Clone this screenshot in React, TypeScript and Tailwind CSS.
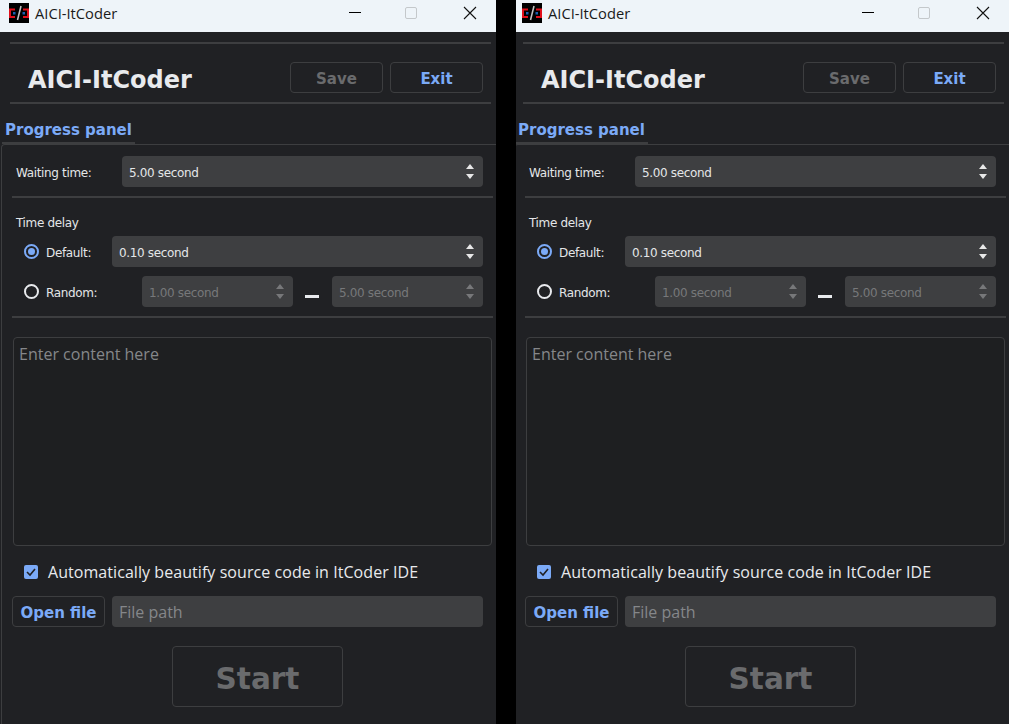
const tahoma = "font-['DejaVu_Sans',sans-serif]";
const small = "font-['DejaVu_Sans',sans-serif] text-[12px] tracking-[-0.35px]";

function Rule({ className = "" }: { className?: string }) {
  return <div className={`h-[2px] bg-[#3d3e40] ${className}`} />;
}

function AppIcon() {
  return (
    <svg width="20" height="20" viewBox="0 0 20 20" className="shrink-0">
      <rect width="20" height="20" fill="#000" />
      <path d="M6 6.5H1V14H6M14 6.5H19V14H14" fill="none" stroke="#e0101c" strokeWidth="2" />
      <rect x="4" y="9" width="2.5" height="2.5" fill="#1c5fb0" />
      <rect x="13.5" y="9" width="2.5" height="2.5" fill="#1c5fb0" />
      <path d="M12 3L8.5 17" stroke="#c4c4c4" strokeWidth="1.6" />
    </svg>
  );
}

function TitleBar() {
  return (
    <div className="flex h-8 shrink-0 items-start bg-[#eef4f9]">
      <div className="ml-[9px] mt-[3px]">
        <AppIcon />
      </div>
      <span className="ml-[6px] mt-[3px] font-['Open_Sans',sans-serif] text-[14.7px] leading-[20px] text-[#1a1a1a]">AICI-ItCoder</span>
      <div className="ml-auto flex items-start">
        <div className="mr-[44px] mt-[12px] h-px w-[12px] bg-black" />
        <div className="mr-[46px] mt-[7px] h-[12px] w-[12px] rounded-[2px] border border-[#c4c8cb]" />
        <svg width="14" height="14" viewBox="0 0 14 14" className="mr-[19px] mt-[6px]">
          <path d="M1 1L13 13M13 1L1 13" stroke="#111" strokeWidth="1.1" fill="none" />
        </svg>
      </div>
    </div>
  );
}

function Spin({ value, disabled = false, className = "" }: { value: string; disabled?: boolean; className?: string }) {
  const arrow = disabled ? "border-[#77787a]" : "border-[#e8e8e8]";
  return (
    <div className={`flex h-[31px] items-center justify-between rounded-[4px] bg-[#3e3f41] pl-[7px] pr-[9px] ${small} ${disabled ? "text-[#77787a]" : "text-[#e4e6e8]"} ${className}`}>
      <span className="pt-[2px]">{value}</span>
      <div className="flex flex-col gap-[5px]">
        <div className={`h-0 w-0 border-x-[4px] border-b-[5px] border-x-transparent ${arrow}`} />
        <div className={`h-0 w-0 border-x-[4px] border-t-[5px] border-x-transparent ${arrow}`} />
      </div>
    </div>
  );
}

function OutlineButton({ label, className = "" }: { label: string; className?: string }) {
  return (
    <div className={`flex items-center justify-center rounded-[4px] border border-[#3d3e40] font-bold ${tahoma} ${className}`}>
      {label}
    </div>
  );
}

function Radio({ checked }: { checked?: boolean }) {
  return (
    <div className={`flex h-[15px] w-[15px] shrink-0 items-center justify-center rounded-full border-2 ${checked ? "border-[#7baaf7]" : "border-[#e8eaed]"}`}>
      {checked && <div className="h-[7px] w-[7px] rounded-full bg-[#7baaf7]" />}
    </div>
  );
}

function Window({ className = "" }: { className?: string }) {
  return (
    <div className={`flex h-[724px] w-[496px] shrink-0 flex-col overflow-hidden bg-[#202124] ${className}`}>
      <TitleBar />
      <Rule className="ml-[10px] mr-[5px] mt-[10px]" />
      <div className="flex h-[58px] items-start">
        <h1 className={`ml-[28px] mt-[21px] text-[24px] font-bold leading-[30px] text-[#e8eaed] ${tahoma}`}>AICI-ItCoder</h1>
        <OutlineButton label="Save" className="ml-auto mt-[18px] h-[31px] w-[93px] pt-[3px] text-[15px] text-[#6a6b6d]" />
        <OutlineButton label="Exit" className="ml-[7px] mr-[13px] mt-[18px] h-[31px] w-[93px] pt-[3px] text-[15px] text-[#7baaf7]" />
      </div>
      <Rule className="ml-[10px] mr-[5px]" />
      <div className="h-[40px]">
        <div className={`ml-[2px] flex h-[40px] w-[133px] items-end border-b-2 border-[#3d3e40] pb-[1px] pl-[3px] text-[15px] font-bold text-[#7baaf7] ${tahoma}`}>
          Progress panel
        </div>
      </div>
      <div className="ml-px flex-1 rounded-tl-[4px] border-l border-t border-[#3d3e40]">
        <div className="ml-[14px] mt-[11px] flex items-center pr-[13px]">
          <span className={`w-[106px] pt-[2px] text-[#e4e6e8] ${small}`}>Waiting time:</span>
          <Spin value="5.00 second" className="flex-1" />
        </div>
        <Rule className="ml-[10px] mr-[3px] mt-[9px]" />
        <div className={`ml-[14px] mt-[18px] leading-[14px] text-[#e4e6e8] ${small}`}>Time delay</div>
        <div className="ml-[22px] mt-[6px] flex items-center pr-[13px]">
          <Radio checked />
          <span className={`ml-[7px] w-[66px] pt-[2px] text-[#e4e6e8] ${small}`}>Default:</span>
          <Spin value="0.10 second" className="flex-1" />
        </div>
        <div className="ml-[22px] mt-[9px] flex items-center pr-[13px]">
          <Radio />
          <span className={`ml-[7px] w-[96px] pt-[2px] text-[#e4e6e8] ${small}`}>Random:</span>
          <Spin value="1.00 second" disabled className="w-[151px]" />
          <div className="ml-[12px] mr-[13px] mt-[10px] h-[3px] w-[14px] bg-[#e8eaed]" />
          <Spin value="5.00 second" disabled className="flex-1" />
        </div>
        <Rule className="ml-[10px] mr-[3px] mt-[9px]" />
        <div className="ml-[11px] mr-[4px] mt-[19px] h-[209px] rounded-[4px] border border-[#3d3e40] bg-[#1e1f21] px-[5px] pt-[5px] font-['Open_Sans',sans-serif] text-[16px] leading-[22px] text-[#85878a]">
          Enter content here
        </div>
        <div className="ml-[22px] mt-[19px] flex items-center">
          <div className="flex h-[14px] w-[14px] items-center justify-center rounded-[2px] bg-[#7baaf7]">
            <svg width="10" height="10" viewBox="0 0 10 10">
              <path d="M1 5L4 8L9 2" fill="none" stroke="#202124" strokeWidth="1.6" />
            </svg>
          </div>
          <span className="ml-[10px] font-['Open_Sans',sans-serif] text-[16px] leading-[14px] tracking-[0.06px] text-[#e8eaed]">Automatically beautify source code in ItCoder IDE</span>
        </div>
        <div className="ml-[10px] mt-[17px] flex items-center pr-[13px]">
          <OutlineButton label="Open file" className="h-[31px] w-[93px] pt-[3px] text-[15px] text-[#7baaf7]" />
          <div className="ml-[7px] flex h-[31px] flex-1 items-center rounded-[4px] bg-[#3e3f41] pl-[7px] font-['Open_Sans',sans-serif] text-[16px] text-[#85878a]">
            File path
          </div>
        </div>
        <OutlineButton label="Start" className="ml-[170px] mt-[19px] h-[61px] w-[171px] pt-[5px] text-[29.5px] text-[#6a6b6d]" />
      </div>
    </div>
  );
}

export default function App() {
  return (
    <div className="flex h-[724px] w-[1009px] overflow-hidden bg-black">
      <Window />
      <div className="ml-[20px] w-[493px] overflow-hidden">
        <Window className="-ml-[3px]" />
      </div>
    </div>
  );
}
